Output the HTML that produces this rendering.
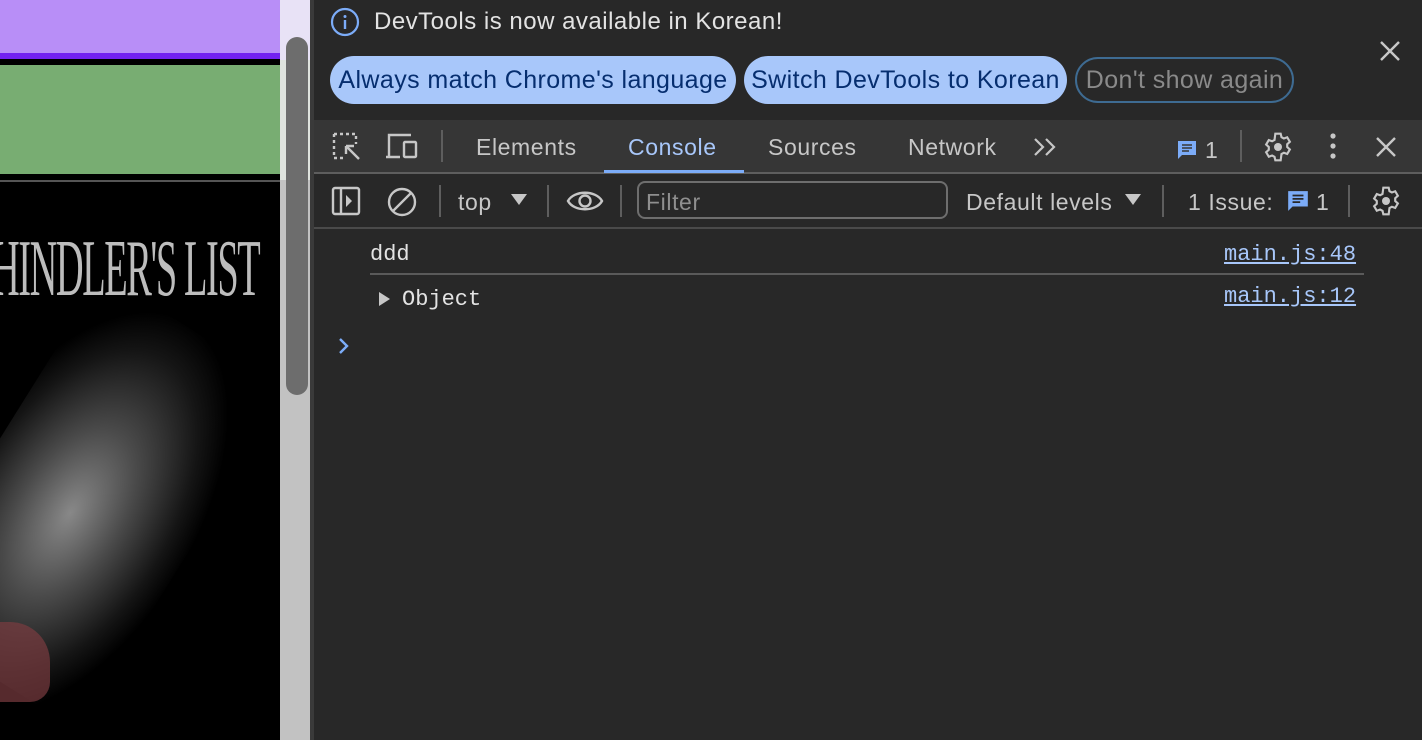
<!DOCTYPE html>
<html><head><style>
*{margin:0;padding:0;box-sizing:border-box}
html,body{width:1422px;height:740px;overflow:hidden}
body{background:#282828;font-family:"Liberation Sans",sans-serif;position:relative}
.a{position:absolute}
.t{color:#e3e3e3;font-size:23px;letter-spacing:0.6px;white-space:nowrap}
.mono{font-family:"Liberation Mono",monospace}
.b{font-size:25px;letter-spacing:0.4px}
</style></head><body>
<!-- left page -->
<div class="a" style="left:0;top:0;width:280px;height:53px;background:#b88ef7"></div>
<div class="a" style="left:0;top:53px;width:280px;height:6px;background:#7322f0"></div>
<div class="a" style="left:0;top:59px;width:280px;height:6px;background:#000"></div>
<div class="a" style="left:0;top:65px;width:280px;height:109px;background:#78ad72"></div>
<div class="a" style="left:0;top:174px;width:280px;height:6px;background:#000"></div>
<div class="a" style="left:0;top:180px;width:280px;height:2px;background:#555"></div>
<div class="a" style="left:0;top:182px;width:280px;height:558px;background:#000;overflow:hidden">
 <div class="a" style="left:-20px;top:120px;width:220px;height:400px;background:radial-gradient(ellipse at 45% 55%,#888 0%,#4a4a4a 30%,#151515 58%,#000 72%);transform:rotate(32deg)"></div>
 <div class="a" style="left:0;top:440px;width:50px;height:80px;background:#7a3c40;border-radius:0 40px 20px 0;opacity:.7"></div>
 <div class="a" style="left:-8px;top:42px;width:600px;font-family:'Liberation Serif',serif;font-size:80px;color:#bdbdbd;letter-spacing:-3px;transform:scaleX(0.48);transform-origin:left;white-space:nowrap;z-index:2">HINDLER'S LIST</div>
</div>
<!-- scrollbar -->
<div class="a" style="left:280px;top:0;width:30px;height:740px;background:#c2c2c2"></div>
<div class="a" style="left:280px;top:0;width:30px;height:60px;background:#e8e2f6"></div>
<div class="a" style="left:280px;top:60px;width:30px;height:120px;background:#dfe3de"></div>
<div class="a" style="left:286px;top:37px;width:22px;height:358px;background:#6d6d6d;border-radius:11px"></div>
<div class="a" style="left:310px;top:0;width:4px;height:740px;background:#3a3a3a"></div>
<!-- infobar -->
<svg class="a" style="left:330px;top:7px" width="30" height="30" viewBox="0 0 30 30"><circle cx="15" cy="15" r="13" fill="none" stroke="#7cacf8" stroke-width="2.2"/><rect x="13.8" y="13" width="2.4" height="9" fill="#7cacf8"/><circle cx="15" cy="9.5" r="1.5" fill="#7cacf8"/></svg>
<div class="a t" style="left:374px;top:8px;font-size:24px;letter-spacing:0.5px">DevTools is now available in Korean!</div>
<div class="a b" style="left:330px;top:56px;width:406px;height:48px;border-radius:24px;background:#a8c7fa;color:#062e6f;line-height:48px;text-align:center;white-space:nowrap">Always match Chrome's language</div>
<div class="a b" style="left:744px;top:56px;width:323px;height:48px;border-radius:24px;background:#a8c7fa;color:#062e6f;line-height:48px;text-align:center;white-space:nowrap">Switch DevTools to Korean</div>
<div class="a b" style="left:1075px;top:57px;width:219px;height:46px;border-radius:23px;border:2px solid #3e6b92;color:#8a8a8a;line-height:42px;text-align:center;white-space:nowrap">Don't show again</div>
<svg class="a" style="left:1378px;top:39px" width="24" height="24"><path d="M3 3L21 21M21 3L3 21" stroke="#c7c7c7" stroke-width="2.4"/></svg>
<!-- tab bar -->
<div class="a" style="left:314px;top:120px;width:1108px;height:52px;background:#363636"></div>
<div class="a" style="left:314px;top:172px;width:1108px;height:2px;background:#5e5e5e"></div>
<svg class="a" style="left:330px;top:130px" width="34" height="34" viewBox="0 0 34 34"><path d="M4 4h22v10" fill="none" stroke="#c7c7c7" stroke-width="2.4" stroke-dasharray="3 3"/><path d="M4 4v24h10" fill="none" stroke="#c7c7c7" stroke-width="2.4" stroke-dasharray="3 3"/><path d="M16 16l13 13M16 16h8M16 16v8" stroke="#c7c7c7" stroke-width="2.4" fill="none"/></svg>
<svg class="a" style="left:384px;top:132px" width="36" height="30" viewBox="0 0 36 30"><path d="M5 24V3h22M2 25h14" stroke="#c7c7c7" stroke-width="2.4" fill="none"/><rect x="20" y="10" width="12" height="15" rx="1" stroke="#c7c7c7" stroke-width="2.4" fill="none"/></svg>
<div class="a" style="left:441px;top:130px;width:2px;height:32px;background:#5e5e5e"></div>
<div class="a t" style="left:476px;top:134px;color:#c7c7c7">Elements</div>
<div class="a t" style="left:628px;top:134px;color:#a8c7fa">Console</div>
<div class="a" style="left:604px;top:170px;width:140px;height:3px;background:#7cacf8"></div>
<div class="a t" style="left:768px;top:134px;color:#c7c7c7">Sources</div>
<div class="a t" style="left:908px;top:134px;color:#c7c7c7">Network</div>
<svg class="a" style="left:1032px;top:136px" width="28" height="22"><path d="M3 3l8 8-8 8M14 3l8 8-8 8" stroke="#c7c7c7" stroke-width="2.2" fill="none"/></svg>
<svg class="a" style="left:1176px;top:139px" width="22" height="22" viewBox="0 0 22 22"><path d="M2 2h18v14H6l-4 4z" fill="#7cacf8"/><path d="M6 6h10M6 9h10M6 12h7" stroke="#363636" stroke-width="1.6"/></svg>
<div class="a t" style="left:1205px;top:137px;color:#c7c7c7">1</div>
<div class="a" style="left:1240px;top:130px;width:2px;height:32px;background:#5e5e5e"></div>
<svg class="a" style="left:1262px;top:131px" width="32" height="32" viewBox="0 0 24 24"><path fill="none" stroke="#c7c7c7" stroke-width="1.6" d="M10 2h4l.6 2.6 1.8 1 2.5-.9 2 3.4-2 1.8v2.1l2 1.8-2 3.4-2.5-.9-1.8 1L14 22h-4l-.6-2.6-1.8-1-2.5.9-2-3.4 2-1.8v-2.1l-2-1.8 2-3.4 2.5.9 1.8-1z"/><circle cx="12" cy="12" r="3" fill="#c7c7c7"/></svg>
<svg class="a" style="left:1327px;top:132px" width="12" height="30"><circle cx="6" cy="4" r="2.6" fill="#c7c7c7"/><circle cx="6" cy="14" r="2.6" fill="#c7c7c7"/><circle cx="6" cy="24" r="2.6" fill="#c7c7c7"/></svg>
<svg class="a" style="left:1375px;top:136px" width="22" height="22"><path d="M2 2L20 20M20 2L2 20" stroke="#c7c7c7" stroke-width="2.4"/></svg>
<!-- console toolbar -->
<div class="a" style="left:314px;top:227px;width:1108px;height:2px;background:#4a4a4a"></div>
<svg class="a" style="left:331px;top:186px" width="30" height="30"><rect x="2" y="2" width="26" height="26" rx="2" stroke="#c7c7c7" stroke-width="2.4" fill="none"/><path d="M10 2v26" stroke="#c7c7c7" stroke-width="2.4"/><path d="M15 9l6 6-6 6z" fill="#c7c7c7"/></svg>
<svg class="a" style="left:386px;top:186px" width="32" height="32"><circle cx="16" cy="16" r="13" stroke="#c7c7c7" stroke-width="2.4" fill="none"/><path d="M7 25L25 7" stroke="#c7c7c7" stroke-width="2.4"/></svg>
<div class="a" style="left:439px;top:185px;width:2px;height:32px;background:#5e5e5e"></div>
<div class="a t" style="left:458px;top:189px;color:#c7c7c7">top</div>
<svg class="a" style="left:510px;top:193px" width="18" height="14"><path d="M1 1h16L9 12z" fill="#c7c7c7"/></svg>
<div class="a" style="left:547px;top:185px;width:2px;height:32px;background:#5e5e5e"></div>
<svg class="a" style="left:566px;top:186px" width="38" height="30"><path d="M2 15C8 4 30 4 36 15 30 26 8 26 2 15z" stroke="#c7c7c7" stroke-width="2.4" fill="none"/><circle cx="19" cy="15" r="5.5" stroke="#c7c7c7" stroke-width="2.4" fill="none"/></svg>
<div class="a" style="left:620px;top:185px;width:2px;height:32px;background:#5e5e5e"></div>
<div class="a" style="left:637px;top:181px;width:311px;height:38px;border:2px solid #6e6e6e;border-radius:8px"></div>
<div class="a t" style="left:646px;top:189px;color:#8f8f8f">Filter</div>
<div class="a t" style="left:966px;top:189px;color:#c7c7c7">Default levels</div>
<svg class="a" style="left:1124px;top:193px" width="18" height="14"><path d="M1 1h16L9 12z" fill="#c7c7c7"/></svg>
<div class="a" style="left:1162px;top:185px;width:2px;height:32px;background:#5e5e5e"></div>
<div class="a t" style="left:1188px;top:189px;color:#c7c7c7">1 Issue:</div>
<svg class="a" style="left:1286px;top:189px" width="24" height="24" viewBox="0 0 22 22"><path d="M2 2h18v14H6l-4 4z" fill="#7cacf8"/><path d="M6 6h10M6 9h10M6 12h7" stroke="#282828" stroke-width="1.6"/></svg>
<div class="a t" style="left:1316px;top:189px;color:#c7c7c7">1</div>
<div class="a" style="left:1348px;top:185px;width:2px;height:32px;background:#5e5e5e"></div>
<svg class="a" style="left:1370px;top:185px" width="32" height="32" viewBox="0 0 24 24"><path fill="none" stroke="#c7c7c7" stroke-width="1.6" d="M10 2h4l.6 2.6 1.8 1 2.5-.9 2 3.4-2 1.8v2.1l2 1.8-2 3.4-2.5-.9-1.8 1L14 22h-4l-.6-2.6-1.8-1-2.5.9-2-3.4 2-1.8v-2.1l-2-1.8 2-3.4 2.5.9 1.8-1z"/><circle cx="12" cy="12" r="3" fill="#c7c7c7"/></svg>
<!-- console -->
<div class="a t mono" style="left:370px;top:242px;font-size:22px;letter-spacing:0">ddd</div>
<div class="a mono" style="left:1224px;top:242px;font-size:22px;color:#a8c7fa;text-decoration:underline">main.js:48</div>
<div class="a" style="left:370px;top:273px;width:994px;height:2px;background:#5a5a5a"></div>
<svg class="a" style="left:378px;top:291px" width="14" height="16"><path d="M1 1l11 7-11 7z" fill="#c7c7c7"/></svg>
<div class="a t mono" style="left:402px;top:287px;font-size:22px;letter-spacing:0">Object</div>
<div class="a mono" style="left:1224px;top:284px;font-size:22px;color:#a8c7fa;text-decoration:underline">main.js:12</div>
<svg class="a" style="left:337px;top:337px" width="14" height="18"><path d="M3 2l7 7-7 7" stroke="#7cacf8" stroke-width="2.4" fill="none"/></svg>
</body></html>
